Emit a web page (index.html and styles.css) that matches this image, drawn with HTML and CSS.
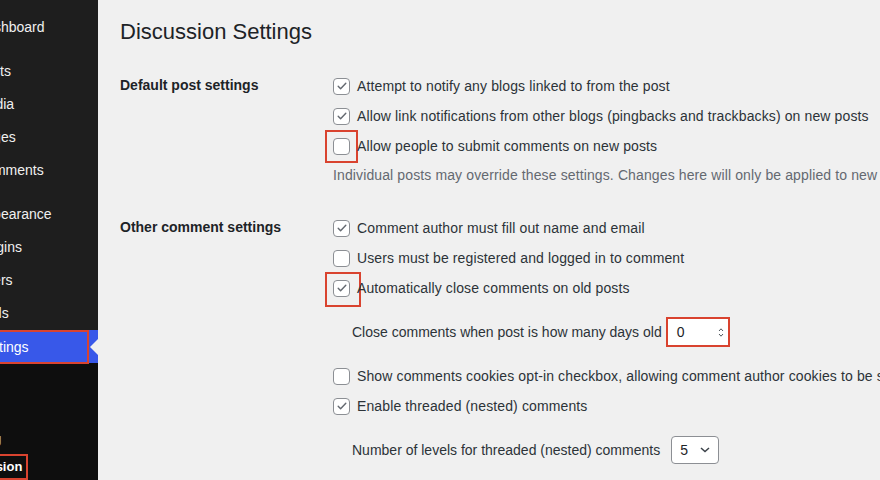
FILE: index.html
```html
<!DOCTYPE html>
<html lang="en">
<head>
    <meta charset="UTF-8">
    <meta name="viewport" content="width=device-width, initial-scale=1.0">
    <title>Discussion Settings</title>
    <link rel="stylesheet" href="styles.css">
</head>
<body>
    <div class="wrap">
        <nav class="adminmenu">
            <ul class="menu">
                <li>Dashboard</li>
                <li class="sep"></li>
                <li>Posts</li>
                <li>Media</li>
                <li>Pages</li>
                <li>Comments</li>
                <li class="sep"></li>
                <li>Appearance</li>
                <li>Plugins</li>
                <li>Users</li>
                <li>Tools</li>
                <li class="current"><span class="hl">Settings</span></li>
            </ul>
            <ul class="submenu">
                <li>General</li>
                <li>Writing</li>
                <li>Reading</li>
                <li class="active"><span class="hl">Discussion</span></li>
                <li>Media</li>
            </ul>
        </nav>

        <main class="content">
            <h1>Discussion Settings</h1>

            <div class="section">
                <h2>Default post settings</h2>
                <div>
                    <div class="opt">
                        <span class="box"><svg width="12" height="12" viewBox="0 0 12 12"><path d="M2.2 6.3l2.4 2.5 5.2-5.6" fill="none" stroke="#646970" stroke-width="1.4" stroke-linecap="round" stroke-linejoin="round"/></svg></span>
                        <span>Attempt to notify any blogs linked to from the post</span>
                    </div>
                    <div class="opt">
                        <span class="box"><svg width="12" height="12" viewBox="0 0 12 12"><path d="M2.2 6.3l2.4 2.5 5.2-5.6" fill="none" stroke="#646970" stroke-width="1.4" stroke-linecap="round" stroke-linejoin="round"/></svg></span>
                        <span>Allow link notifications from other blogs (pingbacks and trackbacks) on new posts</span>
                    </div>
                    <div class="opt">
                        <span class="mark"><span class="box"></span></span>
                        <span>Allow people to submit comments on new posts</span>
                    </div>
                    <p class="desc">Individual posts may override these settings. Changes here will only be applied to new posts.</p>
                </div>
            </div>

            <div class="section">
                <h2>Other comment settings</h2>
                <div>
                    <div class="opt">
                        <span class="box"><svg width="12" height="12" viewBox="0 0 12 12"><path d="M2.2 6.3l2.4 2.5 5.2-5.6" fill="none" stroke="#646970" stroke-width="1.4" stroke-linecap="round" stroke-linejoin="round"/></svg></span>
                        <span>Comment author must fill out name and email</span>
                    </div>
                    <div class="opt">
                        <span class="box"></span>
                        <span>Users must be registered and logged in to comment</span>
                    </div>
                    <div class="opt">
                        <span class="mark wide"><span class="box"><svg width="12" height="12" viewBox="0 0 12 12"><path d="M2.2 6.3l2.4 2.5 5.2-5.6" fill="none" stroke="#646970" stroke-width="1.4" stroke-linecap="round" stroke-linejoin="round"/></svg></span></span>
                        <span>Automatically close comments on old posts</span>
                    </div>
                    <div class="sub">
                        <span>Close comments when post is how many days old</span>
                        <span class="num">
                            <span>0</span>
                            <svg width="6" height="11" viewBox="0 0 6 11"><path d="M1 4l2-2.2L5 4M1 7l2 2.2L5 7" fill="none" stroke="#50575e" stroke-width="1"/></svg>
                        </span>
                    </div>
                    <div class="opt">
                        <span class="box"></span>
                        <span>Show comments cookies opt-in checkbox, allowing comment author cookies to be set</span>
                    </div>
                    <div class="opt">
                        <span class="box"><svg width="12" height="12" viewBox="0 0 12 12"><path d="M2.2 6.3l2.4 2.5 5.2-5.6" fill="none" stroke="#646970" stroke-width="1.4" stroke-linecap="round" stroke-linejoin="round"/></svg></span>
                        <span>Enable threaded (nested) comments</span>
                    </div>
                    <div class="sub">
                        <span>Number of levels for threaded (nested) comments</span>
                        <span class="select">
                            <span>5</span>
                            <svg width="10" height="6" viewBox="0 0 10 6"><path d="M1 1l4 3.6L9 1" fill="none" stroke="#3c434a" stroke-width="1.5"/></svg>
                        </span>
                    </div>
                </div>
            </div>
        </main>
    </div>
</body>
</html>
```

FILE: styles.css
```css
* {
    box-sizing: border-box;
}

body {
    margin: 0;
    background: #f0f0f0;
    font-family: "Liberation Sans", Arial, sans-serif;
    overflow: hidden;
}

ul {
    list-style: none;
    margin: 0;
    padding: 0;
}

.wrap {
    display: flex;
    height: 480px;
    overflow: hidden;
}

/* admin menu, pushed partly off the left edge */
.adminmenu {
    width: 160px;
    margin-left: -62px;
    flex-shrink: 0;
    background: #1e1e1e;
    display: flex;
    flex-direction: column;
}

.menu {
    padding-top: 11px;
}

.menu li {
    height: 33px;
    line-height: 33px;
    padding-left: 38px;
    color: #f0f0f0;
    font-size: 14px;
    white-space: nowrap;
}

.menu li.sep {
    height: 11px;
}

.menu li.current {
    position: relative;
    padding-left: 0;
    background: #3858e9;
    color: #fff;
}

.menu li.current .hl {
    display: block;
    height: 34px;
    margin-right: 9px;
    padding-left: 38px;
    line-height: 30px;
    border: 2px solid #d9432f;
}

.menu li.current::after {
    content: "";
    position: absolute;
    right: 0;
    top: 50%;
    margin-top: -8px;
    border-top: 8px solid transparent;
    border-bottom: 8px solid transparent;
    border-right: 8px solid #f0f0f0;
}

.submenu {
    flex: 1;
    background: #0e0e0e;
    padding-top: 6px;
}

.submenu li {
    height: 28px;
    line-height: 28px;
    padding-left: 15px;
    font-size: 13px;
    color: rgba(240, 246, 252, 0.7);
}

.submenu li.active {
    color: #fff;
    font-weight: bold;
}

.submenu li.active .hl {
    display: inline-block;
    line-height: 22px;
    margin-left: -6px;
    padding: 0 4px;
    border: 2px solid #d9432f;
}

/* settings page */
.content {
    flex: 1;
    min-width: 0;
    padding: 18px 0 0 22px;
    color: #2c3338;
    font-size: 14px;
    white-space: nowrap;
}

h1 {
    margin: 0 0 25px;
    font-size: 22px;
    font-weight: 400;
    line-height: 28px;
    color: #1d2327;
}

.section {
    display: grid;
    grid-template-columns: 213px auto;
}

.section + .section {
    margin-top: 24px;
}

.section h2 {
    margin: 0;
    font-size: 14px;
    font-weight: bold;
    line-height: 28px;
    color: #1d2327;
}

.opt {
    display: flex;
    align-items: center;
    gap: 7px;
    height: 30px;
    letter-spacing: 0.12px;
}

.box {
    display: inline-flex;
    align-items: center;
    justify-content: center;
    flex-shrink: 0;
    width: 17px;
    height: 17px;
    background: #fff;
    border: 1px solid #8c8f94;
    border-radius: 4px;
}

.mark {
    display: inline-flex;
    margin: -8px;
    padding: 6px;
    border: 2px solid #d9432f;
}

.mark.wide {
    margin: -8px -11px -10px -8px;
    padding: 6px 9px 8px 6px;
}

.desc {
    margin: 0;
    height: 28px;
    line-height: 28px;
    color: #646970;
    letter-spacing: 0.12px;
}

.sub {
    display: flex;
    align-items: center;
    gap: 4px;
    height: 58px;
    padding-left: 19px;
}

.num {
    display: flex;
    align-items: center;
    justify-content: space-between;
    width: 64px;
    height: 30px;
    padding: 0 4px 0 9px;
    background: #fff;
    border: 2px solid #d9432f;
    color: #1d2327;
}

.select {
    display: flex;
    align-items: center;
    justify-content: space-between;
    width: 48px;
    height: 28px;
    margin-left: 7px;
    padding: 0 8px 0 8px;
    background: #fff;
    border: 1px solid #8c8f94;
    border-radius: 4px;
    color: #1d2327;
}
```
